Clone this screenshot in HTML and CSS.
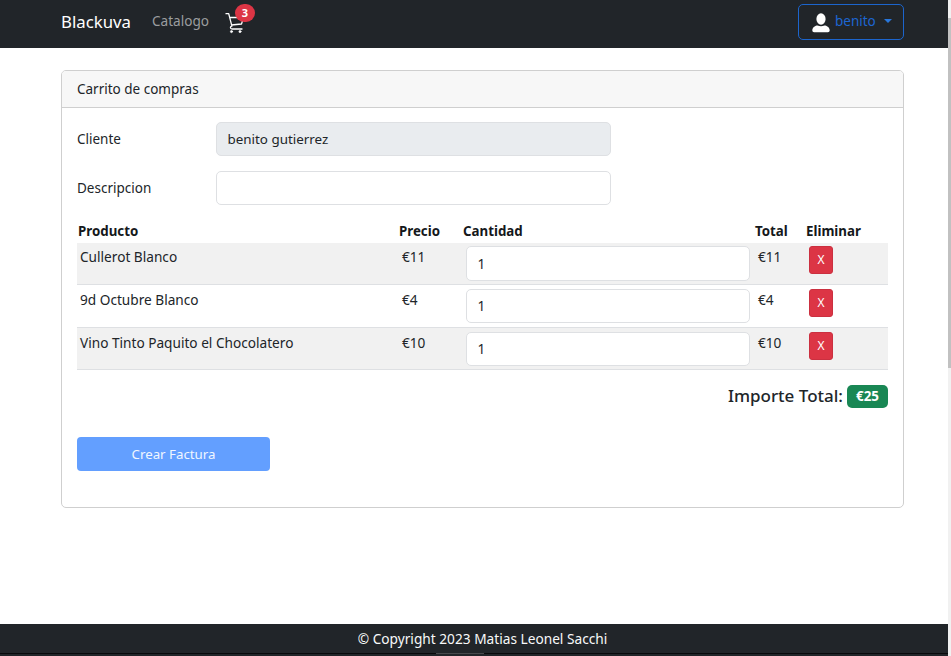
FILE: index.html
```html
<!DOCTYPE html>
<html lang="es">
<head>
<meta charset="utf-8">
<title>Carrito de compras</title>
<link rel="stylesheet" href="styles.css">
</head>
<body>
<div class="page">
  <header class="navbar">
    <a class="brand">Blackuva</a>
    <a class="nav-link">Catalogo</a>
    <a class="cart">
      <svg width="20" height="22" viewBox="0 0 20 22" fill="none" stroke="#fff" stroke-width="1.3" stroke-linecap="round" stroke-linejoin="round"><path d="M1 1.7h2.700l3.200 12.500M4.800 5.500h13.700l-2 6.500-10.100 1M6.900 14.200c-2.200.5-1.800 2.800.2 2.800H17"/><circle cx="6.500" cy="19.600" r="1.100" fill="#fff" stroke-width=".6"/><circle cx="15" cy="19.600" r="1.100" fill="#fff" stroke-width=".6"/></svg>
      <span class="cart-count">3</span>
    </a>
    <button class="user-button">
      <svg width="18" height="20" viewBox="0 0 18 20" fill="#fff"><ellipse cx="9" cy="6" rx="4.600" ry="5.700"/><path d="M.3 17.200c.2-3 3.200-4.500 5.200-4.600 2.300 1 4.700 1 7 0 2 .1 5 1.600 5.200 4.600 0 1.200-.7 2-1.800 2H2.100c-1.100 0-1.800-.8-1.800-2z"/></svg>
      <span class="user-name">benito</span><i class="caret"></i>
    </button>
  </header>

  <main class="card">
    <div class="card-header">Carrito de compras</div>
    <div class="card-body">
      <div class="field"><label>Cliente</label><div class="control disabled">benito gutierrez</div></div>
      <div class="field"><label>Descripcion</label><div class="control"></div></div>

      <div class="table">
        <div class="row head"><span>Producto</span><span>Precio</span><span>Cantidad</span><span>Total</span><span>Eliminar</span></div>
        <div class="row item striped"><span>Cullerot Blanco</span><span class="price">€11</span><div class="cell"><div class="control">1</div></div><span class="price">€11</span><div class="cell"><button class="remove">X</button></div></div>
        <div class="row item"><span>9d Octubre Blanco</span><span class="price">€4</span><div class="cell"><div class="control">1</div></div><span class="price">€4</span><div class="cell"><button class="remove">X</button></div></div>
        <div class="row item striped"><span>Vino Tinto Paquito el Chocolatero</span><span class="price">€10</span><div class="cell"><div class="control">1</div></div><span class="price">€10</span><div class="cell"><button class="remove">X</button></div></div>
      </div>

      <div class="total"><span>Importe Total:</span><span class="badge">€25</span></div>
      <button class="submit">Crear Factura</button>
    </div>
  </main>

  <footer class="footer"><span>© Copyright 2023 Matias Leonel Sacchi</span></footer>
</div>
<div class="scrollbar"><div class="thumb"></div></div>
</body>
</html>
```
FILE: styles.css
```css
* { box-sizing: border-box; }
body {
  margin: 0;
  height: 656px;
  display: flex;
  overflow: hidden;
  background: #fff;
  color: #212529;
  font: 13.5px/22px "Noto Sans", "Open Sans", sans-serif;
}
button { font: inherit; cursor: pointer; }
.page { width: 948px; display: flex; flex-direction: column; }
.scrollbar { width: 3px; background: #f1f1f1; padding-top: 18px; }
.thumb { height: 350px; background: #c1c1c1; }

.navbar {
  height: 48px;
  padding: 0 44px 4px 61px;
  display: flex;
  align-items: center;
  background: #212529;
}
.brand { width: 91px; font-size: 16.8px; color: #fff; }
.nav-link { width: 73px; padding-bottom: 2px; font-size: 13.6px; color: #9b9d9f; }
.cart { position: relative; display: flex; width: 32px; height: 22px; }
.cart svg { position: relative; top: 1px; }
.cart-count {
  position: absolute;
  left: 10px;
  top: -7px;
  width: 20px;
  height: 18px;
  border-radius: 10px;
  background: #dc3545;
  color: #fff;
  font: bold 11px/18px "Noto Sans", sans-serif;
  text-align: center;
}
.user-button {
  width: 106px;
  height: 36px;
  margin-left: auto;
  padding: 0 11px 0 12.5px;
  display: flex;
  align-items: center;
  border: 1px solid #1c65cd;
  border-radius: 5px;
  background: transparent;
  color: #1d66d2;
}
.user-button svg { margin-top: 2px; flex: none; }
.user-name { margin-left: 5.5px; padding-bottom: 2px; line-height: 20px; }
.caret {
  margin-left: auto;
  margin-bottom: 2px;
  border: 4px solid transparent;
  border-top-color: #2877dc;
  border-bottom: 0;
}

.card {
  width: 843px;
  height: 438px;
  margin: 22px 0 0 61px;
  border: 1px solid #cfcfcf;
  border-radius: 5px;
}
.card-header {
  height: 37px;
  padding: 7px 15px;
  background: #f7f7f7;
  border-bottom: 1px solid #cfcfcf;
  border-radius: 4px 4px 0 0;
}
.card-body { padding: 14px 15px; }
.field {
  display: grid;
  grid-template-columns: 139px 395px;
  align-items: center;
  margin-bottom: 15px;
}
.control {
  height: 34px;
  padding: 0 10.5px;
  border: 1px solid #dee0e3;
  border-radius: 5px;
  background: #fff;
  line-height: 31px;
}
.control.disabled { background: #e9ecef; font-size: 13.4px; line-height: 33px; }

.row { display: grid; grid-template-columns: 321px 64px 292px 51px 1fr; }
.head { height: 23px; padding-left: 1px; color: #15181b; font-weight: 700; font-size: 13.3px; }
.item { height: 43px; border-bottom: 1px solid #dee0e3; font-size: 13.65px; }
.item > span { padding: 4px 0 0 3px; }
.item > .price { padding-left: 4px; }
.cell { padding: 4px 4px 0; }
.head + .item { height: 42px; }
.head + .item .cell { padding-top: 3px; }
.head + .item .control { height: 35px; line-height: 33px; }
.head + .item > span { padding-top: 3px; }
.item:last-child { height: 42px; }
.striped { background: #f1f1f1; }
.remove {
  display: block;
  width: 24px;
  height: 28px;
  padding: 0;
  border: 1px solid #cb3040;
  border-radius: 3px;
  background: #dc3545;
  color: #fff;
  font-size: 12px;
}
.total {
  height: 24px;
  margin-top: 14px;
  display: flex;
  justify-content: flex-end;
  align-items: center;
  gap: 4px;
  font-size: 17px;
  font-weight: 500;
}
.badge {
  width: 41px;
  height: 23px;
  border-radius: 5px;
  background: #198754;
  color: #fff;
  font-size: 13.4px;
  font-weight: 700;
  line-height: 23px;
  text-align: center;
}
.submit {
  display: block;
  width: 193px;
  height: 34px;
  margin-top: 29px;
  padding: 0;
  border: 0;
  border-radius: 4px;
  background: #639fff;
  color: #f0f6ff;
  font-size: 13.3px;
}
.footer {
  height: 32px;
  margin-top: auto;
  padding-top: 4px;
  background: linear-gradient(#47494c, #47494c) 436px 29px / 48px 1px no-repeat, linear-gradient(#08090b, #08090b) 0 29px / 100% 1px no-repeat, #212529;
  color: #f8f9fa;
  font-size: 13.7px;
  text-align: center;
}
.footer span { margin-left: 17px; }
```
